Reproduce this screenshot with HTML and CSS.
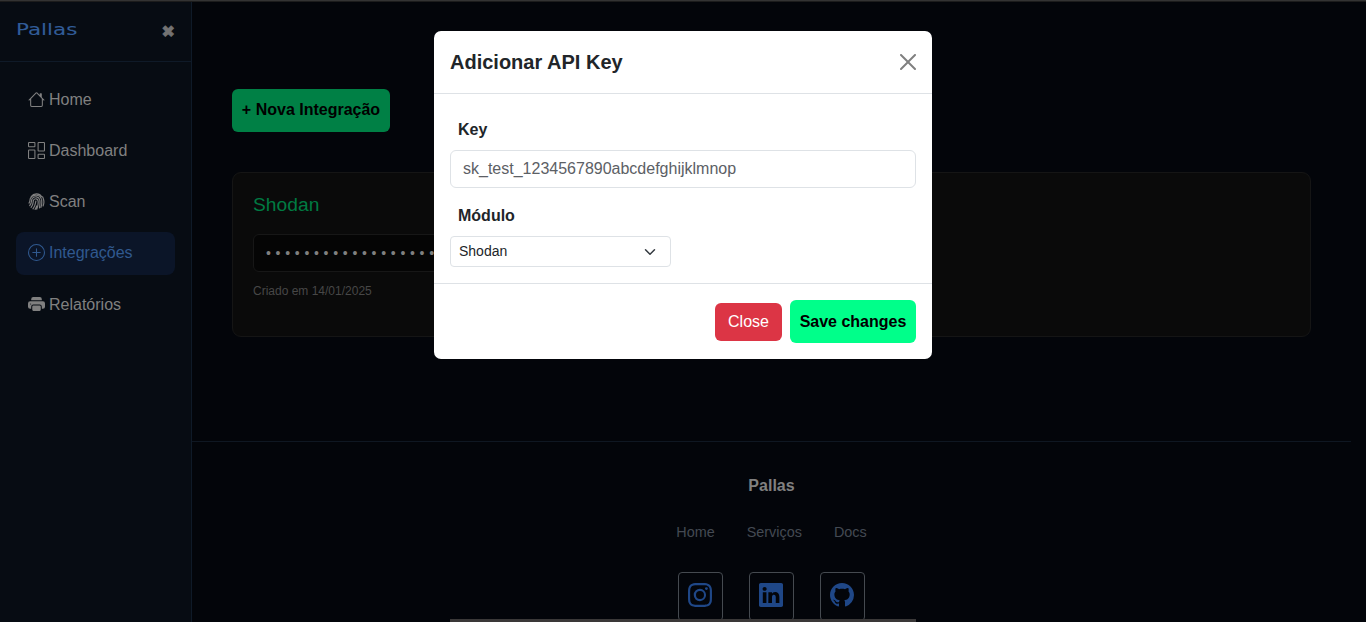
FILE: index.html
```html
<!DOCTYPE html>
<html lang="pt-BR">
<head>
<meta charset="utf-8">
<title>Pallas - Integrações</title>
<link rel="stylesheet" href="styles.css">
</head>
<body>
<div class="app">
  <aside class="sidebar">
    <div class="brand"><span class="logo">Pallas</span><span class="toggle">✖</span></div>
    <nav class="nav">
      <a class="item"><svg class="ico" viewBox="0 0 16 16"><path d="M8.707 1.5a1 1 0 0 0-1.414 0L.646 8.146a.5.5 0 0 0 .708.708L2 8.207V13.5A1.5 1.5 0 0 0 3.5 15h9a1.5 1.5 0 0 0 1.5-1.5V8.207l.646.647a.5.5 0 0 0 .708-.708L13 5.793V2.5a.5.5 0 0 0-.5-.5h-1a.5.5 0 0 0-.5.5v1.293zM13 7.207V13.5a.5.5 0 0 1-.5.5h-9a.5.5 0 0 1-.5-.5V7.207l5-5z"/></svg>Home</a>
      <a class="item"><svg class="ico" viewBox="0 0 16 16"><path d="M6 1v3H1V1zM1 0a1 1 0 0 0-1 1v3a1 1 0 0 0 1 1h5a1 1 0 0 0 1-1V1a1 1 0 0 0-1-1zm14 12v3h-5v-3zm-5-1a1 1 0 0 0-1 1v3a1 1 0 0 0 1 1h5a1 1 0 0 0 1-1v-3a1 1 0 0 0-1-1zM6 8v7H1V8zM1 7a1 1 0 0 0-1 1v7a1 1 0 0 0 1 1h5a1 1 0 0 0 1-1V8a1 1 0 0 0-1-1zm14-6v7h-5V1zm-5-1a1 1 0 0 0-1 1v7a1 1 0 0 0 1 1h5a1 1 0 0 0 1-1V1a1 1 0 0 0-1-1z"/></svg>Dashboard</a>
      <a class="item"><svg class="ico line" viewBox="0 0 16 16"><path d="M3 3.3C5.500-.2 10.900.100 12.800 3.500M1 9.500C2.300 7.500 1.600 6.200 2.300 4.900 4.400.900 11.100 1.400 12.400 5.300M1.600 11.800C4.400 8.300 2.500 7.300 4 5.200c1.800-2.600 6.200-2 7 1 .5 2 .4 4.200-.2 7.800M2.900 13.500C5.900 9.800 4.200 8.600 5.300 6.600c1-1.800 3.900-1.500 4.200.8.400 2.700-.2 5-1.300 7.900M4.700 14.900C7.500 11 6.700 10 7.400 7.600M14.500 5.600c.8 2.500.5 4.800-.3 6.600M12.800 6.300c.4 2.700.2 5-.6 7.200M6.700 15.400c.8-1 1.200-2.200 1.500-3.200M13.700 3.600l.7 1.500"/></svg>Scan</a>
      <a class="item active"><svg class="ico" viewBox="0 0 16 16"><path d="M8 15A7 7 0 1 1 8 1a7 7 0 0 1 0 14m0 1A8 8 0 1 0 8 0a8 8 0 0 0 0 16"/><path d="M8 4a.5.5 0 0 1 .5.5v3h3a.5.5 0 0 1 0 1h-3v3a.5.5 0 0 1-1 0v-3h-3a.5.5 0 0 1 0-1h3v-3A.5.5 0 0 1 8 4"/></svg>Integrações</a>
      <a class="item last"><svg class="ico" viewBox="0 0 16 16"><path d="M5 1a2 2 0 0 0-2 2v1h10V3a2 2 0 0 0-2-2zm6 8H5a1 1 0 0 0-1 1v3a1 1 0 0 0 1 1h6a1 1 0 0 0 1-1v-3a1 1 0 0 0-1-1"/><path d="M0 7a2 2 0 0 1 2-2h12a2 2 0 0 1 2 2v3a2 2 0 0 1-2 2h-1v-2a2 2 0 0 0-2-2H5a2 2 0 0 0-2 2v2H2a2 2 0 0 1-2-2zm2.500 1a.5.5 0 1 0 0-1 .5.5 0 0 0 0 1"/></svg>Relatórios</a>
    </nav>
  </aside>
  <div class="page">
    <main class="content">
      <button class="new">+ Nova Integração</button>
      <section class="card">
        <h2 class="card-title">Shodan</h2>
        <div class="secret">••••••••••••••••••</div>
        <p class="date">Criado em 14/01/2025</p>
      </section>
    </main>
    <footer class="footer">
      <strong class="footer-title">Pallas</strong>
      <div class="links"><a>Home</a><a>Serviços</a><a>Docs</a></div>
      <div class="socials">
        <a class="social"><svg viewBox="0 0 16 16"><path d="M8 0C5.829 0 5.556.010 4.703.048 3.850.088 3.269.222 2.760.420a3.900 3.900 0 0 0-1.417.923A3.900 3.900 0 0 0 .420 2.760C.222 3.268.087 3.850.048 4.700.010 5.555 0 5.827 0 8.001c0 2.172.010 2.444.048 3.297.040.852.174 1.433.372 1.942.205.526.478.972.923 1.417.444.445.890.719 1.416.923.510.198 1.090.333 1.942.372C5.555 15.990 5.827 16 8 16s2.444-.010 3.298-.048c.851-.040 1.434-.174 1.943-.372a3.900 3.900 0 0 0 1.416-.923c.445-.445.718-.891.923-1.417.197-.509.332-1.090.372-1.942C15.990 10.445 16 10.173 16 8s-.010-2.445-.048-3.299c-.040-.851-.175-1.433-.372-1.941a3.900 3.900 0 0 0-.923-1.417A3.900 3.900 0 0 0 13.240.420c-.510-.198-1.092-.333-1.943-.372C10.443.010 10.172 0 7.998 0zm-.717 1.442h.718c2.136 0 2.389.007 3.232.046.780.035 1.204.166 1.486.275.373.145.640.319.920.599s.453.546.598.920c.110.281.240.705.275 1.485.039.843.047 1.096.047 3.231s-.008 2.389-.047 3.232c-.035.780-.166 1.203-.275 1.485a2.500 2.500 0 0 1-.599.919c-.280.280-.546.453-.920.598-.280.110-.704.240-1.485.276-.843.038-1.096.047-3.232.047s-2.390-.009-3.233-.047c-.780-.036-1.203-.166-1.485-.276a2.500 2.500 0 0 1-.920-.598 2.500 2.500 0 0 1-.600-.920c-.109-.281-.240-.705-.275-1.485-.038-.843-.046-1.096-.046-3.233s.008-2.388.046-3.231c.036-.780.166-1.204.276-1.486.145-.373.319-.640.599-.920s.546-.453.920-.598c.282-.110.705-.240 1.485-.276.738-.034 1.024-.044 2.515-.045zm4.988 1.328a.960.960 0 1 0 0 1.920.960.960 0 0 0 0-1.920m-4.270 1.122a4.109 4.109 0 1 0 0 8.217 4.109 4.109 0 0 0 0-8.217m0 1.441a2.667 2.667 0 1 1 0 5.334 2.667 2.667 0 0 1 0-5.334"/></svg></a>
        <a class="social"><svg viewBox="0 0 16 16"><path d="M0 1.146C0 .513.526 0 1.175 0h13.650C15.474 0 16 .513 16 1.146v13.708c0 .633-.526 1.146-1.175 1.146H1.175C.526 16 0 15.487 0 14.854zm4.943 12.248V6.169H2.542v7.225zm-1.200-8.212c.837 0 1.358-.554 1.358-1.248-.015-.709-.520-1.248-1.342-1.248S2.400 3.226 2.400 3.934c0 .694.521 1.248 1.327 1.248zm4.908 8.212V9.359c0-.216.016-.432.080-.586.173-.431.568-.878 1.232-.878.869 0 1.216.662 1.216 1.634v3.865h2.401V9.250c0-2.220-1.184-3.252-2.764-3.252-1.274 0-1.845.700-2.165 1.193v.025h-.016l.016-.025V6.169h-2.400c.030.678 0 7.225 0 7.225z"/></svg></a>
        <a class="social"><svg viewBox="0 0 16 16"><path d="M8 0C3.580 0 0 3.580 0 8c0 3.540 2.290 6.530 5.470 7.590.400.070.550-.170.550-.380 0-.190-.010-.820-.010-1.490-2.010.370-2.530-.490-2.690-.940-.090-.230-.480-.940-.820-1.130-.280-.150-.680-.520-.010-.530.630-.010 1.080.580 1.230.820.720 1.210 1.870.870 2.330.660.070-.520.280-.870.510-1.070-1.780-.200-3.640-.890-3.640-3.950 0-.870.310-1.590.820-2.150-.080-.200-.360-1.020.080-2.120 0 0 .670-.210 2.200.820.640-.180 1.320-.270 2-.270s1.360.090 2 .270c1.530-1.040 2.200-.820 2.200-.820.440 1.100.160 1.920.080 2.120.510.560.820 1.270.820 2.150 0 3.070-1.870 3.750-3.650 3.950.290.250.540.730.540 1.480 0 1.070-.010 1.930-.010 2.200 0 .210.150.460.550.380A8.010 8.010 0 0 0 16 8c0-4.420-3.580-8-8-8"/></svg></a>
      </div>
    </footer>
  </div>
</div>
<div class="edge-top"></div>
<div class="edge-bottom"></div>
<div class="modal" role="dialog">
  <header class="modal-head"><h1>Adicionar API Key</h1><svg class="close" viewBox="0 0 16 16"><path d="M.293.293a1 1 0 0 1 1.414 0L8 6.586 14.293.293a1 1 0 1 1 1.414 1.414L9.414 8l6.293 6.293a1 1 0 0 1-1.414 1.414L8 9.414l-6.293 6.293a1 1 0 0 1-1.414-1.414L6.586 8 .293 1.707a1 1 0 0 1 0-1.414"/></svg></header>
  <div class="modal-body">
    <label class="label" for="key">Key</label>
    <input class="input" id="key" placeholder="sk_test_1234567890abcdefghijklmnop">
    <label class="label second">Módulo</label>
    <div class="select"><span>Shodan</span><svg class="chevron" viewBox="0 0 16 16"><path d="m2 5 6 6 6-6"/></svg></div>
  </div>
  <footer class="modal-foot"><button class="btn-close">Close</button><button class="btn-save">Save changes</button></footer>
</div>
</body>
</html>
```
FILE: styles.css
```css
* { box-sizing: border-box; }
body { margin: 0; height: 622px; overflow: hidden; background: #03050a; color: #808080; font: 16px/24px "Liberation Sans", Arial, sans-serif; }
h1, h2, p { margin: 0; }
button { font: inherit; border: 0; padding: 0; }
.app { display: flex; height: 622px; }
.sidebar { width: 192px; flex: none; background: #070c13; border-right: 1px solid #0f1a28; }
.brand { height: 62px; padding: 0 16px; display: flex; align-items: center; justify-content: space-between; border-bottom: 1px solid #0f1a28; }
.logo { width: 60px; font: 16.500px/24px "DejaVu Sans", sans-serif; color: #315c98; -webkit-text-stroke: .1px #315c98; transform: translateY(-1px) scaleX(1.300); transform-origin: left; }
.toggle { padding-top: 2px; font: 16px/24px "DejaVu Sans", sans-serif; color: #737373; -webkit-text-stroke: .8px #737373; }
.nav { padding: 16px; display: flex; flex-direction: column; gap: 8px; }
.item { height: 43.200px; padding: 0 13px 0 12px; border-radius: 8px; display: flex; align-items: center; gap: 5px; }
.item.active { background: #0b1528; color: #30598f; }
.item.last { padding-top: 1px; }
.ico { width: 17px; height: 17px; margin: -1px -1px 0 0; fill: currentColor; }
.line { fill: none; stroke: currentColor; stroke-width: 1.100; stroke-linecap: round; }
.page { width: 1159px; flex: none; }
.content { height: 441px; padding: 89px 40px 0; }
.new { display: block; width: 158px; height: 43px; border-radius: 6px; background: #008045; color: #000; font-weight: 700; padding-bottom: 2px; }
.card { margin-top: 40px; height: 165px; padding: 20px; border: 1px solid #151515; border-radius: 9px; background: #0a0a0a; }
.card-title { font-size: 19.200px; line-height: 23px; font-weight: 400; color: #007a42; letter-spacing: .05px; }
.secret { width: 320px; margin-top: 18px; height: 38px; padding: 6px 12px; border: 1px solid #171717; border-radius: 6px; background: #050505; font-size: 14px; letter-spacing: 4.700px; overflow: hidden; white-space: nowrap; }
.date { margin-top: 10px; font-size: 12px; line-height: 18px; color: #474747; }
.footer { border-top: 1px solid #0f1722; height: 181px; padding-top: 32px; display: flex; flex-direction: column; align-items: center; overflow: hidden; }
.footer-title { line-height: 24px; }
.links { margin-top: 22px; display: flex; gap: 32px; font-size: 14.400px; color: #444a53; }
.socials { margin-top: 28px; display: flex; gap: 26px; }
.social { width: 45px; height: 49px; border: 1px solid #454a50; border-radius: 4px; display: flex; justify-content: center; padding: 10px .4px 0 0; }
.social svg { width: 24px; height: 24px; fill: #1f4787; }
.edge-top { position: absolute; top: 0; left: 0; width: 1366px; height: 1px; background: #333; box-shadow: 0 1px #1c1c1c; }
.edge-bottom { position: absolute; left: 450px; top: 619px; width: 466px; height: 3px; background: #3a3838; }
.modal { position: absolute; left: 434px; top: 31px; width: 498px; height: 328px; border-radius: 7px; background: #fff; color: #212529; }
.modal-head { height: 63px; padding: 0 16px; border-bottom: 1px solid #dee2e6; display: flex; align-items: center; justify-content: space-between; }
.modal-head h1 { font-size: 20px; line-height: 30px; }
.close { width: 16px; height: 16px; fill: #808080; }
.modal-body { height: 190px; padding: 24px 16px 0; border-bottom: 1px solid #dee2e6; }
.label { display: block; padding-left: 8px; font-weight: 700; }
.input { display: block; width: 100%; height: 38px; margin-top: 8px; padding: 0 12px; border: 1px solid #dee2e6; border-radius: 6px; background: #fff; font: inherit; }
.input::placeholder { color: #5c6065; opacity: 1; }
.second { margin-top: 16px; }
.select { width: 221px; height: 31px; margin-top: 8px; padding: 0 14px 0 8px; border: 1px solid #dee2e6; border-radius: 4px; display: flex; align-items: center; justify-content: space-between; font-size: 14px; }
.select span { padding-bottom: 2px; }
.chevron { width: 12px; height: 12px; fill: none; stroke: #343a40; stroke-width: 2; stroke-linecap: round; stroke-linejoin: round; }
.modal-foot { height: 75px; padding: 0 16px; display: flex; align-items: center; justify-content: flex-end; gap: 8px; }
.btn-close { width: 67px; height: 38px; border-radius: 6px; background: #dc3545; color: #fff; }
.btn-save { width: 126px; height: 43px; border-radius: 6px; background: #00ff8a; color: #000; font-weight: 700; }
```
